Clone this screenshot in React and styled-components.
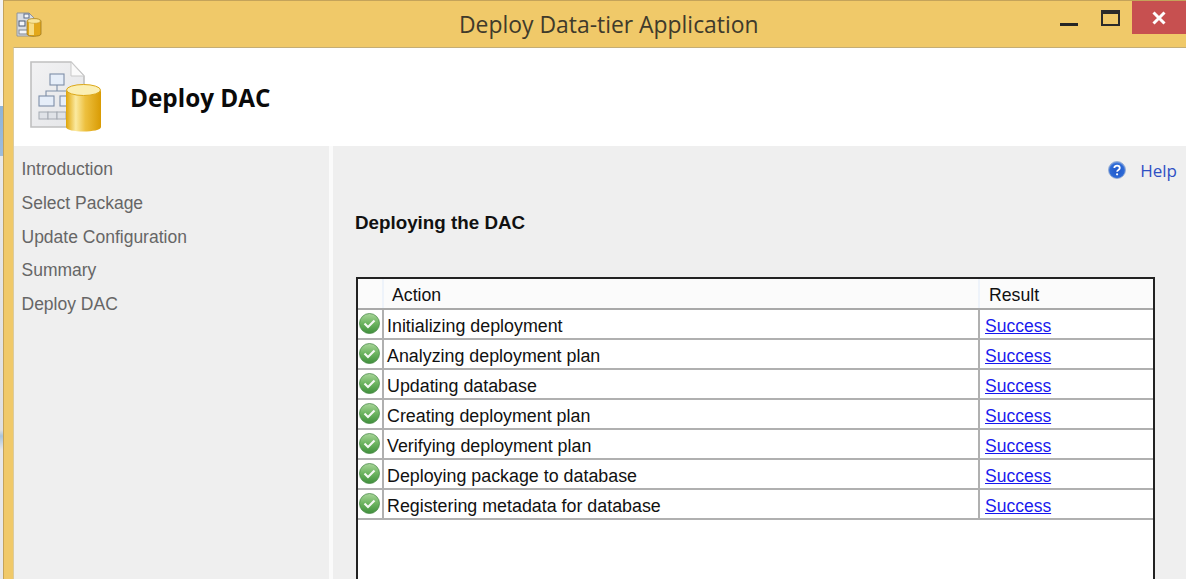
import React from "react";
import styled, { createGlobalStyle } from "styled-components";

const Global = createGlobalStyle`
  html, body { margin: 0; padding: 0; background: #fff; }
  body { width: 1186px; height: 579px; overflow: hidden; font-family: "Liberation Sans", Arial, sans-serif; }
`;
const Screen = styled.div`
  width: 1186px; height: 579px; display: flex; overflow: hidden;
`;
const Desktop = styled.div`
  width: 3px; flex: none;
  background: linear-gradient(to bottom, #f4f4f4 0 90px, #f4f4f4 90px, #f7f7f7 106px, #8fb4d8 106px, #9dbcdc 156px, #e9e9e9 156px, #e0e0e0 430px, #a9c4dc 436px, #e8e8e8 450px, #e8e8e8 100%);
`;
const Window = styled.div`
  flex: 1; min-width: 0; display: flex; flex-direction: column;
  background: #f0c969;
  border-top: 1px solid #c4a35a;
  border-left: 1px solid #c4a35a;
`;
const TitleBar = styled.div`
  height: 46px; flex: none; display: grid; grid-template-columns: 455px auto 1fr; align-items: start;
`;
const AppIcon = styled.div`
  padding: 10px 0 0 12px; height: 26px;
`;
const Title = styled.div`
  font-family: "Open Sans", sans-serif; font-size: 22.9px; line-height: 47px; color: #3f3a2b;
`;
const Controls = styled.div`
  display: flex; justify-content: flex-end; align-items: flex-start;
`;
const MinBtn = styled.div`
  width: 18px; height: 3px; background: #252525; margin: 22px 23px 0 0; flex: none;
`;
const MaxBtn = styled.div`
  box-sizing: border-box; width: 19px; height: 16px; border: 2px solid #2a2a2a; border-top-width: 4px; margin: 9px 12px 0 0; flex: none;
`;
const CloseBtn = styled.div`
  width: 54px; height: 33px; background: #c75050; flex: none; display: flex; align-items: center; justify-content: center;
`;
const Client = styled.div`
  flex: 1; min-height: 0; margin-left: 9px; display: flex; flex-direction: column; background: #fff;
  border-top: 1px solid #c4ad75;
  border-left: 1px solid #dccb9d;
`;
const Banner = styled.div`
  height: 98px; flex: none; display: flex; align-items: flex-start; background: #fff; padding-left: 16px;
`;
const BannerIcon = styled.div`
  width: 73px; height: 72px; margin-top: 13px; flex: none;
`;
const BannerTitle = styled.h1`
  margin: 0 0 0 27px; font-family: "Open Sans", sans-serif; font-weight: 700; font-size: 24.3px; line-height: 32px; padding-top: 34px; color: #0a0a0a;
`;
const Body = styled.div`
  flex: 1; min-height: 0; display: flex; gap: 4px; background: #fbfbfb;
`;
const Sidebar = styled.nav`
  width: 315px; flex: none; background: #efefef; box-sizing: border-box; padding: 7px 0 0 7.5px;
  display: flex; flex-direction: column;
`;
const NavItem = styled.div`
  height: 33.75px; line-height: 33.75px; font-family: "Liberation Sans", sans-serif; font-size: 17.5px; color: #666;
`;
const Main = styled.main`
  flex: 1; min-width: 0; background: #efefef; box-sizing: border-box; padding: 12px 0 0 22px; overflow: hidden;
  display: flex; flex-direction: column;
`;
const HelpRow = styled.div`
  display: flex; justify-content: flex-end; align-items: center; gap: 14px; height: 24px; padding-right: 9px;
`;
const HelpLink = styled.span`
  font-family: "Open Sans", sans-serif; font-size: 17px; color: #2e4fc4; position: relative; top: 1px;
`;
const Heading = styled.h2`
  margin: 30px 0 0 0; font-family: "Liberation Sans", sans-serif; font-size: 18.8px; line-height: 24px; font-weight: 700; color: #111;
`;
const Grid = styled.div`
  margin: 42px 0 0 1px; width: 799px; box-sizing: border-box; flex: none;
  border: 2px solid #222; border-bottom: 0; background: #fff; height: 400px;
`;
const HeadRow = styled.div`
  display: grid; grid-template-columns: 24px 596px 1fr; height: 31px; box-sizing: border-box;
  background: #fbfbfb; border-bottom: 2px solid #a9a9a9;
`;
const HeadCell = styled.div`
  font-size: 17.7px; line-height: 33px; height: 29px; color: #111; padding-left: ${p => p.$pad}px;
  border-left: 2px solid #eef3fa;
`;
const Row = styled.div`
  display: grid; grid-template-columns: 24px 596px 1fr; height: 30px; box-sizing: border-box;
  border-bottom: 2px solid #b0b0b0;
`;
const IconCell = styled.div`
  display: flex; justify-content: flex-start; padding: 3px 0 0 1px; height: 22px;
`;
const ActionCell = styled.div`
  font-size: 17.85px; line-height: 33px; height: 28px; color: #111; padding-left: 3px; border-left: 2px solid #b0b0b0;
`;
const ResultCell = styled.div`
  font-size: 17.5px; line-height: 33px; height: 28px; padding-left: 5px; border-left: 2px solid #b0b0b0;
`;
const ResultLink = styled.a`
  color: #1a1aee; text-decoration: underline;
`;

function SmallDocIcon() {
  return (
    <svg width="26" height="26" viewBox="0 0 26 26">
      <path d="M1 2h12l5 5v18H1z" fill="#d9dde4" stroke="#8f949c" />
      <rect x="8" y="3" width="5" height="4" fill="#f4f6fa" stroke="#5d6d88" />
      <rect x="3" y="10" width="6" height="5" fill="#f4f6fa" stroke="#4a5870" />
      <rect x="3" y="19" width="9" height="4" fill="#f4f6fa" stroke="#7f858f" />
      <path d="M11 10c0-3 14-3 14 0v13c0 3-14 3-14 0z" fill="#e3a81b" stroke="#9e7a1e" strokeWidth=".8" />
      <rect x="13" y="11" width="5" height="13" fill="#f7dc83" />
      <ellipse cx="18" cy="10" rx="6.500" ry="2.300" fill="#f8e59a" stroke="#b88f22" strokeWidth=".5" />
    </svg>
  );
}

function BannerDbIcon() {
  return (
    <svg width="73" height="72" viewBox="0 0 73 72">
      <defs>
        <linearGradient id="cyl" x1="0" x2="1" y1="0" y2="0">
          <stop offset="0" stopColor="#dfa408" />
          <stop offset=".28" stopColor="#fbeaa0" />
          <stop offset=".55" stopColor="#edc03f" />
          <stop offset="1" stopColor="#d99b03" />
        </linearGradient>
        <linearGradient id="page" x1="0" x2="1" y1="0" y2="1">
          <stop offset="0" stopColor="#f2f2f3" />
          <stop offset="1" stopColor="#e4e5e8" />
        </linearGradient>
      </defs>
      <path d="M1 1h40l13 14v51H1z" fill="url(#page)" stroke="#c0c0c0" strokeWidth="1.600" />
      <path d="M41 1v14h13z" fill="#fafafa" stroke="#c9c9c9" />
      <g fill="#e6eef9" stroke="#7e8fa8" strokeWidth="1.100">
        <rect x="20" y="13" width="14" height="11" />
        <rect x="9" y="35" width="15" height="10" />
        <rect x="30" y="35" width="15" height="10" />
      </g>
      <path d="M27 24v6M16 35v-5h22v5" fill="none" stroke="#7e8fa8" strokeWidth="1.100" />
      <g fill="#dfe2e7" stroke="#a4a9b1" strokeWidth="1">
        <rect x="9" y="51" width="9" height="7" />
        <rect x="18" y="51" width="9" height="7" />
        <rect x="27" y="51" width="9" height="7" />
      </g>
      <path d="M36 31c0-8 35-8 35 0v35c0 6-35 6-35 0z" fill="url(#cyl)" />
      <ellipse cx="53.500" cy="29" rx="17" ry="5.500" fill="#fbefb4" stroke="#dca716" strokeWidth="1" />
    </svg>
  );
}

function HelpIcon() {
  return (
    <svg width="18" height="18" viewBox="0 0 18 18">
      <defs>
        <radialGradient id="hb" cx=".5" cy=".55" r=".6">
          <stop offset="0" stopColor="#1f57c9" />
          <stop offset=".7" stopColor="#2d6ad6" />
          <stop offset="1" stopColor="#a9c3ea" />
        </radialGradient>
      </defs>
      <circle cx="9" cy="9" r="8.500" fill="url(#hb)" stroke="#8ea6cf" strokeWidth=".8" />
      <path d="M6.300 7c0-3.300 5.500-3.300 5.500 0 0 2-2.700 2-2.700 3.800" fill="none" stroke="#fff" strokeWidth="1.800" />
      <circle cx="9.100" cy="13.300" r="1.100" fill="#fff" />
    </svg>
  );
}

function CheckIcon({ id }) {
  return (
    <svg width="21" height="21" viewBox="0 0 21 21">
      <defs>
        <linearGradient id={id} x1="0" x2="0" y1="0" y2="1">
          <stop offset="0" stopColor="#a9d69a" />
          <stop offset=".5" stopColor="#6cb35f" />
          <stop offset="1" stopColor="#3f8f3c" />
        </linearGradient>
      </defs>
      <circle cx="10.500" cy="10.500" r="10" fill={`url(#${id})`} stroke="#4a8a48" strokeWidth=".8" />
      <path d="M5.500 10.500l3.500 3.500 6.500-6.500" fill="none" stroke="#f4f8f2" strokeWidth="2.200" />
    </svg>
  );
}

const nav = ["Introduction", "Select Package", "Update Configuration", "Summary", "Deploy DAC"];
const rows = [
  "Initializing deployment",
  "Analyzing deployment plan",
  "Updating database",
  "Creating deployment plan",
  "Verifying deployment plan",
  "Deploying package to database",
  "Registering metadata for database",
];

export default function App() {
  return (
    <Screen>
      <Global />
      <Desktop />
      <Window>
        <TitleBar>
          <AppIcon><SmallDocIcon /></AppIcon>
          <Title>Deploy Data-tier Application</Title>
          <Controls>
            <MinBtn />
            <MaxBtn />
            <CloseBtn>
              <svg width="14" height="14" viewBox="0 0 14 14">
                <path d="M1.500 1.500l11 11M12.500 1.500l-11 11" stroke="#fff" strokeWidth="3" />
              </svg>
            </CloseBtn>
          </Controls>
        </TitleBar>
        <Client>
          <Banner>
            <BannerIcon><BannerDbIcon /></BannerIcon>
            <BannerTitle>Deploy DAC</BannerTitle>
          </Banner>
          <Body>
            <Sidebar>
              {nav.map(n => <NavItem key={n}>{n}</NavItem>)}
            </Sidebar>
            <Main>
              <HelpRow>
                <HelpIcon />
                <HelpLink>Help</HelpLink>
              </HelpRow>
              <Heading>Deploying the DAC</Heading>
              <Grid>
                <HeadRow>
                  <div />
                  <HeadCell $pad={8}>Action</HeadCell>
                  <HeadCell $pad={9}>Result</HeadCell>
                </HeadRow>
                {rows.map((r, i) => (
                  <Row key={r}>
                    <IconCell><CheckIcon id={`chk${i}`} /></IconCell>
                    <ActionCell>{r}</ActionCell>
                    <ResultCell><ResultLink href="#">Success</ResultLink></ResultCell>
                  </Row>
                ))}
              </Grid>
            </Main>
          </Body>
        </Client>
      </Window>
    </Screen>
  );
}
